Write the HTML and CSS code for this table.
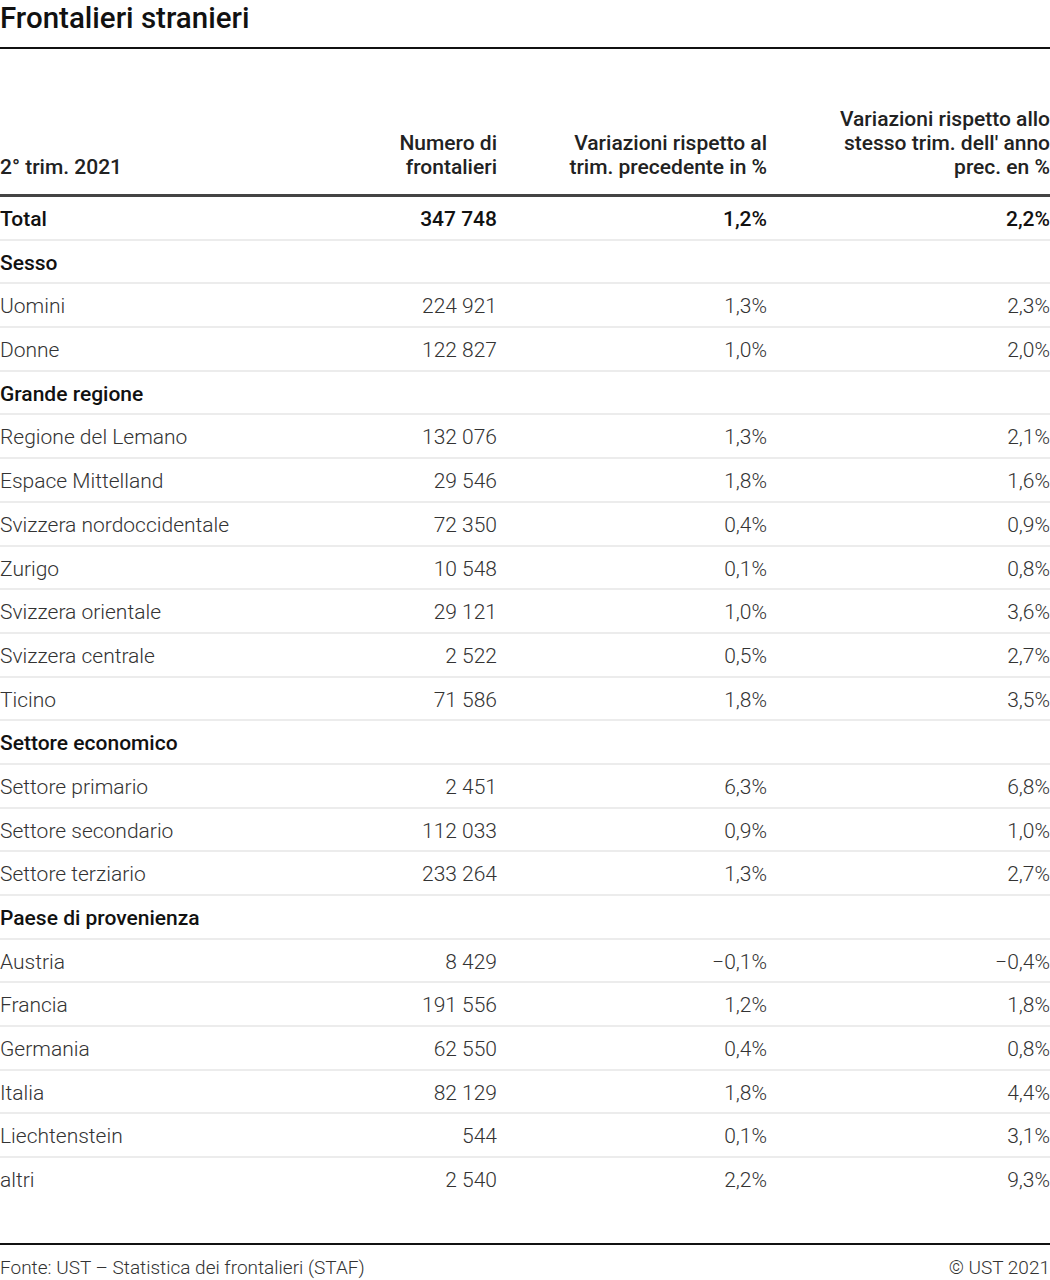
FILE: index.html
```html
<!DOCTYPE html>
<html lang="it">
<head>
<meta charset="utf-8">
<title>Frontalieri stranieri</title>
<link rel="stylesheet" href="styles.css">
</head>
<body>
<div class="page">
  <h1 class="title">Frontalieri stranieri</h1>
  <table class="data">
    <thead>
      <tr>
        <th class="c1">2° trim. 2021</th>
        <th class="c2">Numero di<br>frontalieri</th>
        <th class="c3">Variazioni rispetto al<br>trim. precedente in %</th>
        <th class="c4">Variazioni rispetto allo<br>stesso trim. dell' anno<br>prec. en %</th>
      </tr>
    </thead>
    <tbody>
      <tr class="strong"><td>Total</td><td>347 748</td><td>1,2%</td><td>2,2%</td></tr>
      <tr class="strong"><td>Sesso</td><td></td><td></td><td></td></tr>
      <tr><td>Uomini</td><td>224 921</td><td>1,3%</td><td>2,3%</td></tr>
      <tr><td>Donne</td><td>122 827</td><td>1,0%</td><td>2,0%</td></tr>
      <tr class="strong"><td>Grande regione</td><td></td><td></td><td></td></tr>
      <tr><td>Regione del Lemano</td><td>132 076</td><td>1,3%</td><td>2,1%</td></tr>
      <tr><td>Espace Mittelland</td><td>29 546</td><td>1,8%</td><td>1,6%</td></tr>
      <tr><td>Svizzera nordoccidentale</td><td>72 350</td><td>0,4%</td><td>0,9%</td></tr>
      <tr><td>Zurigo</td><td>10 548</td><td>0,1%</td><td>0,8%</td></tr>
      <tr><td>Svizzera orientale</td><td>29 121</td><td>1,0%</td><td>3,6%</td></tr>
      <tr><td>Svizzera centrale</td><td>2 522</td><td>0,5%</td><td>2,7%</td></tr>
      <tr><td>Ticino</td><td>71 586</td><td>1,8%</td><td>3,5%</td></tr>
      <tr class="strong"><td>Settore economico</td><td></td><td></td><td></td></tr>
      <tr><td>Settore primario</td><td>2 451</td><td>6,3%</td><td>6,8%</td></tr>
      <tr><td>Settore secondario</td><td>112 033</td><td>0,9%</td><td>1,0%</td></tr>
      <tr><td>Settore terziario</td><td>233 264</td><td>1,3%</td><td>2,7%</td></tr>
      <tr class="strong"><td>Paese di provenienza</td><td></td><td></td><td></td></tr>
      <tr><td>Austria</td><td>8 429</td><td>−0,1%</td><td>−0,4%</td></tr>
      <tr><td>Francia</td><td>191 556</td><td>1,2%</td><td>1,8%</td></tr>
      <tr><td>Germania</td><td>62 550</td><td>0,4%</td><td>0,8%</td></tr>
      <tr><td>Italia</td><td>82 129</td><td>1,8%</td><td>4,4%</td></tr>
      <tr><td>Liechtenstein</td><td>544</td><td>0,1%</td><td>3,1%</td></tr>
      <tr class="last"><td>altri</td><td>2 540</td><td>2,2%</td><td>9,3%</td></tr>
    </tbody>
  </table>
  <footer class="foot">
    <span class="src">Fonte: UST – Statistica dei frontalieri (STAF)</span>
    <span class="copy">© UST 2021</span>
  </footer>
</div>
</body>
</html>
```
FILE: styles.css
```css
html, body {
  margin: 0;
  padding: 0;
  background: #fff;
}
body {
  font-family: Roboto, "Liberation Sans", sans-serif;
  color: #222;
}
.page {
  width: 1050px;
}
.title {
  margin: 0;
  font-size: 29.5px;
  font-weight: 500;
  line-height: 36px;
  color: #111;
  border-bottom: 2px solid #111;
  padding-bottom: 11px;
}
.data {
  width: 100%;
  border-collapse: collapse;
  table-layout: fixed;
}
.data th {
  font-size: 21px;
  font-weight: 500;
  line-height: 24px;
  color: #222;
  vertical-align: bottom;
  padding: 58px 0 15px;
  border-bottom: 3px solid #444;
  text-align: right;
}
.data th.c1 { text-align: left; width: 300px; }
.data th.c2 { width: 197px; }
.data th.c3 { width: 270px; }
.data th.c4 { width: 283px; }
.data td {
  font-size: 21px;
  font-weight: 300;
  line-height: 24px;
  color: #333;
  padding: 10px 0 7.7px;
  border-bottom: 2px solid #ececec;
  text-align: right;
  white-space: nowrap;
}
.data td:first-child { text-align: left; }
.data tr.strong td {
  font-weight: 500;
  color: #111;
}
.data tr.last td { border-bottom: none; }
.foot {
  margin-top: 43px;
  border-top: 2px solid #111;
  display: flex;
  justify-content: space-between;
  padding-top: 12px;
  font-size: 19px;
  font-weight: 300;
  line-height: 22px;
  color: #333;
}
```
